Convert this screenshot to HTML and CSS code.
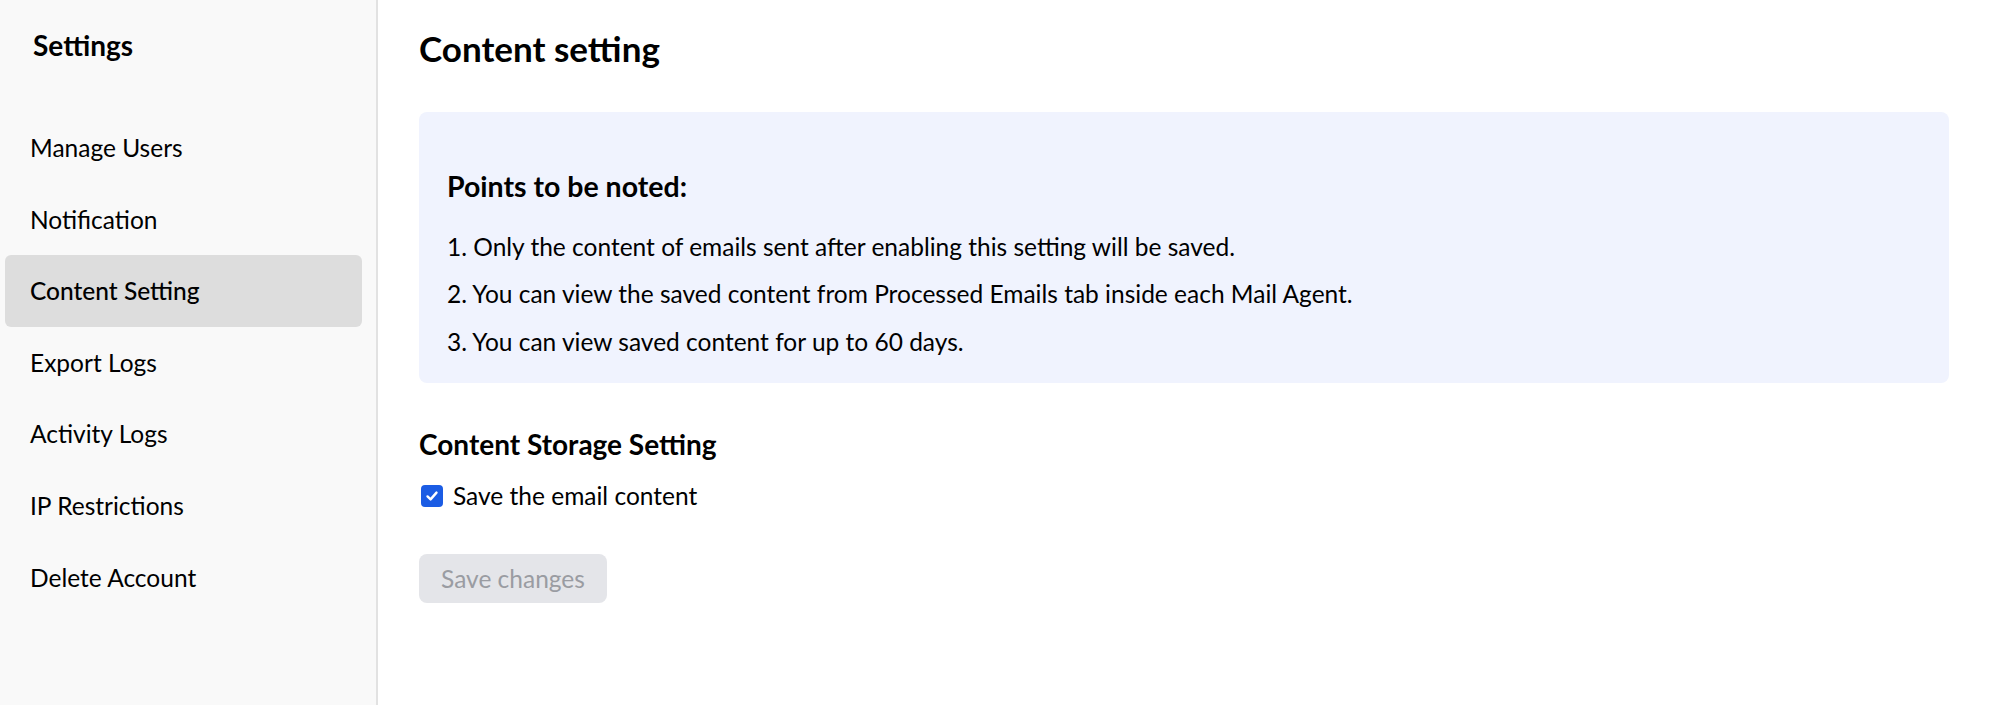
FILE: index.html
```html
<!DOCTYPE html>
<html lang="en">
<head>
    <meta charset="UTF-8">
    <meta name="viewport" content="width=device-width, initial-scale=1.0">
    <title>Content setting</title>
    <link rel="stylesheet" href="styles.css">
</head>
<body>
    <aside class="sidebar">
        <h2 class="sidebar-title">Settings</h2>
        <nav class="menu">
            <a href="#" class="menu-item">Manage Users</a>
            <a href="#" class="menu-item">Notification</a>
            <a href="#" class="menu-item active">Content Setting</a>
            <a href="#" class="menu-item">Export Logs</a>
            <a href="#" class="menu-item">Activity Logs</a>
            <a href="#" class="menu-item">IP Restrictions</a>
            <a href="#" class="menu-item">Delete Account</a>
        </nav>
    </aside>

    <main class="content">
        <h1>Content setting</h1>

        <div class="notes">
            <h3>Points to be noted:</h3>
            <p>1. Only the content of emails sent after enabling this setting will be saved.</p>
            <p>2. You can view the saved content from Processed Emails tab inside each Mail Agent.</p>
            <p>3. You can view saved content for up to 60 days.</p>
        </div>

        <h4 class="section-title">Content Storage Setting</h4>
        <label class="check-row">
            <span class="checkbox">
                <svg width="14" height="14" viewBox="0 0 14 14">
                    <path d="M2.5 7.4 L5.6 10.4 L11.5 3.6" fill="none" stroke="#fff" stroke-width="2.4" stroke-linecap="round" stroke-linejoin="round"/>
                </svg>
            </span>
            Save the email content
        </label>

        <button type="button" class="save-button" disabled>Save changes</button>
    </main>
</body>
</html>
```

FILE: styles.css
```css
* {
    box-sizing: border-box;
}

html, body {
    height: 100%;
}

body {
    margin: 0;
    display: flex;
    font-family: Lato, "Open Sans", Arial, sans-serif;
    color: #000;
    background-color: #fff;
}

.sidebar {
    width: 378px;
    flex-shrink: 0;
    background-color: #f9f9f9;
    border-right: 2px solid #e2e2e2;
    padding: 29px 14px 0 5px;
}

.sidebar-title {
    margin: 0 0 51px 28px;
    font-size: 28px;
    line-height: 32px;
    font-weight: 700;
}

.menu {
    display: flex;
    flex-direction: column;
}

.menu-item {
    display: block;
    padding: 21px 25px;
    font-size: 24.5px;
    line-height: 29.6px;
    color: #000;
    text-decoration: none;
    border-radius: 6px;
}

.menu-item.active {
    background-color: #dddddd;
    font-weight: 500;
}

.content {
    flex: 1;
    padding: 26.5px 51px 0 41px;
}

h1 {
    margin: 0 0 43.5px;
    font-size: 35px;
    line-height: 42px;
    font-weight: 700;
}

.notes {
    display: flex;
    flex-direction: column;
    gap: 11.5px;
    background-color: #f0f3fe;
    border-radius: 8px;
    padding: 56px 28px 23px;
}

.notes h3 {
    margin: 0 0 13px;
    font-size: 28.5px;
    line-height: 36px;
    font-weight: 700;
}

.notes p {
    margin: 0;
    font-size: 24.5px;
    line-height: 36px;
}

.section-title {
    margin: 44px 0 20px;
    font-size: 28px;
    line-height: 34px;
    font-weight: 700;
}

.check-row {
    display: flex;
    align-items: center;
    gap: 10px;
    font-size: 24.5px;
    line-height: 30px;
    padding-left: 2px;
    cursor: pointer;
}

.checkbox {
    width: 22px;
    height: 22px;
    border-radius: 4px;
    background-color: #1b5ce4;
    display: flex;
    align-items: center;
    justify-content: center;
}

.save-button {
    margin-top: 43.5px;
    width: 188px;
    height: 49px;
    border: none;
    border-radius: 8px;
    background-color: #e4e5e9;
    color: #9a9ca2;
    font-family: inherit;
    font-size: 24.5px;
    padding: 0;
}
```
